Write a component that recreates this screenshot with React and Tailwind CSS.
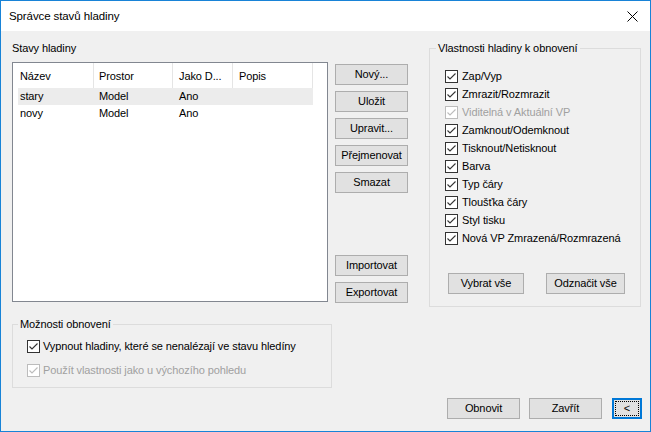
import React from 'react';

function Check({ disabled }) {
  const c = disabled ? '#bcbcbc' : '#333333';
  return (
    <span
      className={`w-[13px] h-[13px] border bg-white flex items-center justify-center shrink-0 ${
        disabled ? 'border-[#bcbcbc]' : 'border-[#333333]'
      }`}
    >
      <svg width="11" height="11" viewBox="0 0 11 11">
        <path d="M1.5 5.5 L4 8 L9.5 2.5" fill="none" stroke={c} strokeWidth="1.1" />
      </svg>
    </span>
  );
}

function Btn({ children, className = '' }) {
  return (
    <button
      className={`h-[21px] bg-[#e1e1e1] border border-[#adadad] text-[11px] leading-none text-black flex items-center justify-center whitespace-nowrap ${className}`}
    >
      {children}
    </button>
  );
}

const layerProps = [
  { label: 'Zap/Vyp' },
  { label: 'Zmrazit/Rozmrazit' },
  { label: 'Viditelná v Aktuální VP', disabled: true },
  { label: 'Zamknout/Odemknout' },
  { label: 'Tisknout/Netisknout' },
  { label: 'Barva' },
  { label: 'Typ čáry' },
  { label: 'Tloušťka čáry' },
  { label: 'Styl tisku' },
  { label: 'Nová VP Zmrazená/Rozmrazená' },
];

const states = [
  { name: 'stary', space: 'Model', def: 'Ano', selected: true },
  { name: 'novy', space: 'Model', def: 'Ano' },
];

export default function App() {
  return (
    <div className="w-[651px] h-[432px] border border-[#1883d7] bg-[#f0f0f0] flex flex-col font-['Liberation_Sans',Arial,sans-serif] text-[11px] tracking-[-0.1px] text-black overflow-hidden whitespace-nowrap">
      {/* title bar */}
      <div className="h-[30px] bg-white flex items-center justify-between pl-[8px] pr-[12px] shrink-0">
        <span className="leading-[16px] text-[11.5px]">Správce stavů hladiny</span>
        <svg width="11" height="11" viewBox="0 0 11 11">
          <path d="M0.5 0.5L10.5 10.5M10.5 0.5L0.5 10.5" stroke="#000" strokeWidth="1" />
        </svg>
      </div>

      <div className="flex-1 flex flex-col pl-[11px] pr-[8px]">
        <div className="flex pt-[9px]">
          {/* left block */}
          <div className="flex flex-col w-[397px]">
            <div className="flex">
              <div className="w-[316px] flex flex-col">
                <div className="leading-[16px] h-[16px]">Stavy hladiny</div>
                <div className="mt-[6px] h-[240px] border border-[#828790] bg-white pl-[5px]">
                  <div className="flex h-[25px] items-center">
                    <div className="w-[76px] h-full flex items-center pl-[2px] pt-[2px] border-r border-[#e5e5e5]">Název</div>
                    <div className="w-[79px] h-full flex items-center pl-[5px] pt-[2px] border-r border-[#e5e5e5]">Prostor</div>
                    <div className="w-[60px] h-full flex items-center pl-[6px] pt-[2px] border-r border-[#e5e5e5]">Jako D...</div>
                    <div className="w-[80px] h-full flex items-center pl-[6px] pt-[2px] border-r border-[#e5e5e5]">Popis</div>
                  </div>
                  {states.map((s) => (
                    <div
                      key={s.name}
                      className={`flex h-[17px] items-center w-[295px] ${s.selected ? 'bg-[#ececec]' : ''}`}
                    >
                      <div className="w-[76px] pl-[2px]">{s.name}</div>
                      <div className="w-[79px] pl-[5px]">{s.space}</div>
                      <div className="w-[60px] pl-[6px]">{s.def}</div>
                    </div>
                  ))}
                </div>
              </div>
              <div className="ml-[7px] w-[73px] flex flex-col pt-[24px] gap-[6px]">
                <Btn className="w-full">Nový...</Btn>
                <Btn className="w-full">Uložit</Btn>
                <Btn className="w-full">Upravit...</Btn>
                <Btn className="w-full">Přejmenovat</Btn>
                <Btn className="w-full">Smazat</Btn>
                <Btn className="w-full mt-[56px]">Importovat</Btn>
                <Btn className="w-full">Exportovat</Btn>
              </div>
            </div>

            <fieldset className="mt-[13px] w-[320px] h-[72px] border border-[#dcdcdc] pl-[5px]">
              <legend className="px-[2px] leading-[16px]">Možnosti obnovení</legend>
              <div className="pl-[9px] pt-[2px]">
                <div className="flex items-center gap-[3px] h-[24px]">
                  <Check />
                  <span>Vypnout hladiny, které se nenalézají ve stavu hledíny</span>
                </div>
                <div className="flex items-center gap-[3px] h-[24px]">
                  <Check disabled />
                  <span className="text-[#a0a0a0]">Použít vlastnosti jako u výchozího pohledu</span>
                </div>
              </div>
            </fieldset>
          </div>

          {/* right group */}
          <fieldset className="ml-[20px] w-[212px] h-[267px] border border-[#dcdcdc] pl-[6px]">
            <legend className="px-[2px] leading-[16px]">Vlastnosti hladiny k obnovení</legend>
            <div className="pl-[9px] pt-[11px]">
              {layerProps.map((p) => (
                <div key={p.label} className="flex items-center gap-[4px] h-[18px]">
                  <Check disabled={p.disabled} />
                  <span className={p.disabled ? 'text-[#a0a0a0]' : ''}>{p.label}</span>
                </div>
              ))}
            </div>
            <div className="flex pl-[12px] mt-[26px] gap-[22px]">
              <Btn className="w-[76px]">Vybrat vše</Btn>
              <Btn className="w-[79px]">Odznačit vše</Btn>
            </div>
          </fieldset>
        </div>

        {/* bottom buttons */}
        <div className="mt-auto mb-[12px] flex justify-end">
          <Btn className="w-[73px]">Obnovit</Btn>
          <Btn className="w-[73px] ml-[9px]">Zavřít</Btn>
          <button className="ml-[10px] w-[30px] h-[21px] bg-[#e1e1e1] border-2 border-[#0078d7] flex items-center justify-center p-[1px]">
            <span className="w-full h-full border border-dotted border-black flex items-center justify-center leading-none">
              &lt;
            </span>
          </button>
        </div>
      </div>
    </div>
  );
}
